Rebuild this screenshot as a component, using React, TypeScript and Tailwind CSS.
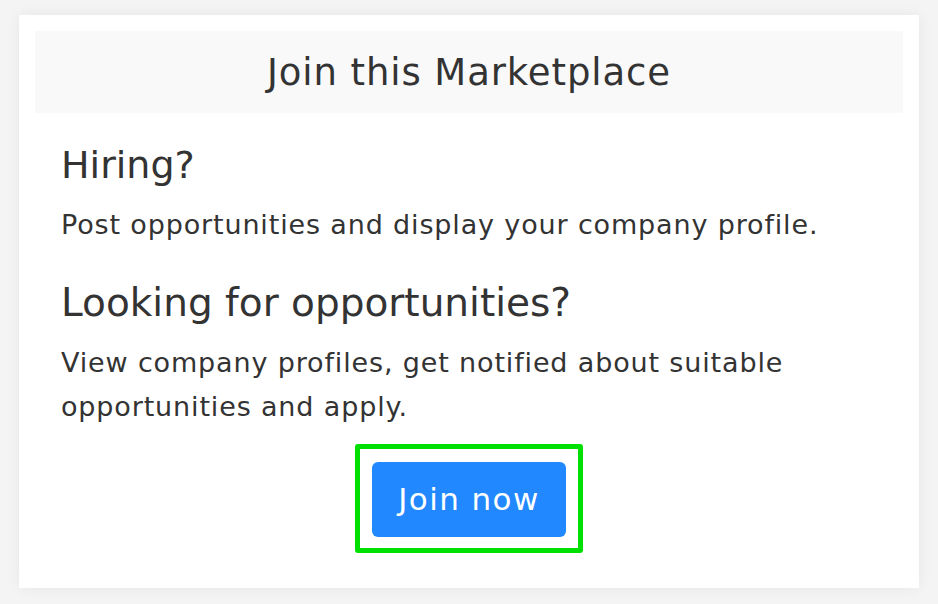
import React from "react";

const font = { fontFamily: '"DejaVu Sans", "Open Sans", sans-serif' };

export default function App() {
  return (
    <div className="w-[938px] h-[604px] bg-[#f4f4f4] pt-[15px] pl-[19px]" style={font}>
      <div className="w-[900px] h-[573px] bg-white p-[16px] shadow-[0_0_14px_rgba(0,0,0,0.06)]">
        <div className="h-[82px] bg-[#f9f9f9] flex items-center justify-center">
          <h1 className="text-[37px] tracking-[0.9px] text-[#333] leading-none">Join this Marketplace</h1>
        </div>
        <div className="px-[26px] text-[#333]">
          <h2 className="mt-[30px] text-[38px] leading-[44px]">Hiring?</h2>
          <p className="mt-[16px] text-[27px] tracking-[0.85px] leading-[44px]">
            Post opportunities and display your company profile.
          </p>
          <h2 className="mt-[34px] text-[39px] leading-[44px]">Looking for opportunities?</h2>
          <p className="mt-[16px] text-[27px] tracking-[0.85px] leading-[44px] w-[790px]">
            View company profiles, get notified about suitable opportunities and apply.
          </p>
          <div className="mt-[15px] flex justify-center">
            <div className="border-[5px] border-[#00e000] rounded-[3px] px-[12px] pt-[13px] pb-[11px]">
              <button className="w-[194px] h-[75px] bg-[#2188ff] rounded-[6px] text-white text-[31px] tracking-[1.4px]">
                Join now
              </button>
            </div>
          </div>
        </div>
      </div>
    </div>
  );
}
